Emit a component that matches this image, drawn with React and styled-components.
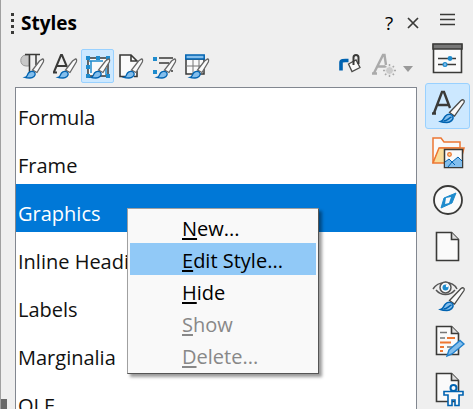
import React, { useState } from "react";
import styled, { createGlobalStyle } from "styled-components";

const DARK = "#3a3a38";
const BLUE = "#1e8bcd";

const styles = ["Formula", "Frame", "Graphics", "Inline Headings", "Labels", "Marginalia", "OLE"];

const menuItems = [
  { label: "New..." },
  { label: "Edit Style...", active: true },
  { label: "Hide" },
  { label: "Show", disabled: true },
  { label: "Delete...", disabled: true },
];

// Brush laid over the small toolbar icons
function SmallBrush() {
  return (
    <g>
      <path d="M22.500 6c1.300 0 1.300 1.500.8 3L17 19.500 12.500 17 19.500 8z" fill="#fafafa" stroke="#666" strokeWidth="1.300" />
      <path d="M5 24.500c2.500-.5 2-2.500 3.500-4.500s5-2.500 6.500 0c1 2.500-2 5-5 5-2 0-3.500 0-5-.5z" fill="#83beec" stroke="#0063b1" strokeWidth="1.300" />
    </g>
  );
}

// Same brush for the 32px deck icons
function LargeBrush() {
  return (
    <g>
      <path d="M29 11.500c2-1.500 4-.5 3 2L22.500 27 17.500 23.500z" fill="#fafafa" stroke="#4a4a48" strokeWidth="1.300" />
      <path d="M8.500 32.500c3-.5 2.500-3 5-5.500s6.500-2 7.500.5c.8 3-2.500 6-6 6-2.500 0-4.500 0-6.500-1z" fill="#83beec" stroke="#0063b1" strokeWidth="1.500" />
      <path d="M11.500 32c4 0 5-3 8-4" fill="none" stroke="#0063b1" strokeWidth="1.500" />
    </g>
  );
}

const SmallIcon = ({ children }) => (
  <svg width="24" height="26" viewBox="0 0 24 26" aria-hidden="true">{children}</svg>
);

const LargeIcon = ({ children }) => (
  <svg width="32" height="34" viewBox="0 0 32 34" aria-hidden="true">{children}</svg>
);

const ParagraphIcon = () => (
  <SmallIcon>
    <path d="M9 2H6C-1 2-1 13 6 13h3z" fill="#c8c8c8" stroke="#999" />
    <path d="M5 1.500h15M9.500 2v18M16 2v10" fill="none" stroke={DARK} strokeWidth="1.500" />
    <SmallBrush />
  </SmallIcon>
);

const CharacterIcon = () => (
  <SmallIcon>
    <path d="M1 19 8 2h1l5 12M4 13h9M0 19.500h4" fill="none" stroke={DARK} strokeWidth="2" />
    <SmallBrush />
  </SmallIcon>
);

const FrameIcon = () => (
  <SmallIcon>
    <path d="M2 5h20v18H2z" fill="#fafafa" stroke={DARK} strokeWidth="1.500" />
    <path d="M3 8h14M5 8v12M20 15v7" stroke={BLUE} strokeWidth="1.500" />
    <path d="M0 3h4v4H0zM10 3h4v4h-4zM20 3h4v4h-4zM0 12h4v4H0zM0 21h4v4H0zM20 21h4v4h-4z" fill={BLUE} />
    <SmallBrush />
  </SmallIcon>
);

const PageIcon = () => (
  <SmallIcon>
    <path d="M1 23V2h11l6 6v15z" fill="#fafafa" />
    <path d="M6 23.500H1V2h11l6 6H12V2M18 18v5.500h-3" fill="none" stroke={DARK} strokeWidth="1.600" />
    <SmallBrush />
  </SmallIcon>
);

const ListIcon = () => (
  <SmallIcon>
    <path d="M1 4h4v4H1zM1 17h4v4H1z" fill={BLUE} />
    <path d="M7 5h14M7 10h10M19 18h2" stroke={DARK} strokeWidth="1.500" />
    <SmallBrush />
  </SmallIcon>
);

const TableIcon = () => (
  <SmallIcon>
    <path d="M1 6h18v15H1z" fill="#fafafa" stroke={DARK} strokeWidth="1.500" />
    <path d="M1 13h18M8 6v15M14 6v15" stroke="#777" />
    <path d="M.8 2h18.400v4H.8z" fill="#83beec" stroke="#0063b1" strokeWidth="1.500" />
    <SmallBrush />
  </SmallIcon>
);

const FillIcon = () => (
  <SmallIcon>
    <path d="M2 17.500V9.500C2 7 5 7.500 9.500 7.500" fill="none" stroke="#0063b1" strokeWidth="3.600" />
    <path d="M9.500 11 17 7l4 7.500-8 4z" fill="#fafafa" stroke="#4a4a48" strokeWidth="1.300" />
    <path d="M14.500 12V4.500c0-3.500 5-3.500 5 0V11" fill="none" stroke={DARK} strokeWidth="2" />
  </SmallIcon>
);

const NewStyleIcon = () => (
  <SmallIcon>
    <path d="M2 20 11 2h1.500l1.500 10M6 13.500h7M0 20.500h5" fill="none" stroke="#aaa" strokeWidth="2.400" />
    <path d="M17.500 11v13M11 17.500h13M13 13l9 9M22 13l-9 9" stroke="#aaa" strokeWidth="1.500" />
    <circle cx="17.500" cy="17.500" r="4" fill="#ccc" stroke="#efefef" />
  </SmallIcon>
);

const PropertiesIcon = () => (
  <LargeIcon>
    <path d="M1.500 2.500h28v28h-28z" fill="#fafafa" stroke={DARK} strokeWidth="1.600" />
    <path d="M1 2h29v5H1z" fill="#777" stroke={DARK} strokeWidth="1.600" />
    <path d="M6 16.500h18M6 22.500h18" stroke={DARK} strokeWidth="1.500" />
    <circle cx="18" cy="16.500" r="2.400" fill={BLUE} />
    <circle cx="13" cy="22.500" r="1.900" fill="#83beec" stroke={BLUE} strokeWidth="1.200" />
  </LargeIcon>
);

const StylesIcon = () => (
  <LargeIcon>
    <path d="M2 24 10 3h2l6 16M5 16h12M0 24.500h4" fill="none" stroke={DARK} strokeWidth="2.400" />
    <LargeBrush />
  </LargeIcon>
);

const GalleryIcon = () => (
  <LargeIcon>
    <path d="M1 27V2h8l3 4h16v6H8L1 27" fill="#fafafa" stroke="#ed7733" strokeWidth="1.500" />
    <path d="m1 27 6-15h25l-4 15z" fill="#f9dc9a" stroke="#ed7733" strokeWidth="1.500" />
    <path d="M12.500 13.500h18v18h-18z" fill="#fafafa" stroke={DARK} strokeWidth="1.500" />
    <path d="M13 30v-4l4-3 3 3 6-5 4 4v6H13z" fill="#83beec" />
    <path d="m13 26 4-3 3 3 6-5 4 4M16 31l4-5 3 3" fill="none" stroke="#0063b1" />
    <circle cx="17.500" cy="18.500" r="1.800" fill="#f9dc9a" stroke="#ed7733" strokeWidth="1.300" />
  </LargeIcon>
);

const NavigatorIcon = () => (
  <LargeIcon>
    <circle cx="16" cy="17" r="14" fill="#fafafa" stroke={DARK} strokeWidth="1.800" />
    <path d="m24 10-4 10-11 5 3-10z" fill={BLUE} stroke={BLUE} strokeLinejoin="round" />
    <path d="m19 14-2 6-4 1 1-6z" fill="#fafafa" />
  </LargeIcon>
);

const SheetOutline = () => (
  <>
    <path d="M4.500 2.500h15l7 7v21h-22z" fill="#fafafa" stroke={DARK} strokeWidth="1.600" />
    <path d="M19.500 2.500v7h7" fill="#ddd" stroke={DARK} strokeWidth="1.600" />
  </>
);

const BlankPageIcon = () => (
  <LargeIcon>
    <SheetOutline />
  </LargeIcon>
);

const InspectorIcon = () => (
  <LargeIcon>
    <path d="M1 12C6 4 20 3 25 12M4 13c5 6 14 6 19 0" fill="none" stroke="#555" strokeWidth="1.500" />
    <circle cx="13.500" cy="10.500" r="5.500" fill="#fafafa" stroke="#555" strokeWidth="1.500" />
    <circle cx="13.500" cy="10.500" r="3" fill={BLUE} />
    <circle cx="15" cy="9" r="1.200" fill="#fafafa" />
    <LargeBrush />
  </LargeIcon>
);

const ChangesIcon = () => (
  <LargeIcon>
    <SheetOutline />
    <path d="M8 8.500h7M8 14h5M15 23h6" stroke="#777" strokeWidth="1.300" />
    <path d="M15 14h8M8 18.500h11M8 23h4M8 27h3" stroke="#ed7733" strokeWidth="2" />
    <path d="m15 32 2-6L28 16.500l4 3.500-12 10z" fill="#83beec" stroke="#2080cc" strokeWidth="1.400" />
  </LargeIcon>
);

const AccessibilityIcon = () => (
  <LargeIcon>
    <SheetOutline />
    <path d="M12 20.500h19v3.500h-4v10.500h-4V29h-3v5.500h-4V24h-4z" fill="#fafafa" stroke="#0063b1" strokeWidth="1.600" />
    <circle cx="21.500" cy="17" r="3" fill="#fafafa" stroke="#0063b1" strokeWidth="2" />
  </LargeIcon>
);

const families = [
  { name: "Paragraph Styles", Icon: ParagraphIcon },
  { name: "Character Styles", Icon: CharacterIcon },
  { name: "Frame Styles", Icon: FrameIcon },
  { name: "Page Styles", Icon: PageIcon },
  { name: "List Styles", Icon: ListIcon },
  { name: "Table Styles", Icon: TableIcon },
];

const decks = [
  { name: "Properties", Icon: PropertiesIcon },
  { name: "Styles", Icon: StylesIcon },
  { name: "Gallery", Icon: GalleryIcon },
  { name: "Navigator", Icon: NavigatorIcon },
  { name: "Page", Icon: BlankPageIcon },
  { name: "Style Inspector", Icon: InspectorIcon },
  { name: "Manage Changes", Icon: ChangesIcon },
  { name: "Accessibility Check", Icon: AccessibilityIcon },
];

export default function App() {
  const [family, setFamily] = useState("Frame Styles");
  const [deck, setDeck] = useState("Styles");
  const [selected, setSelected] = useState("Graphics");

  return (
    <>
      <GlobalStyle />
      <Sidebar>
        <Panel>
          <TitleBar>
            <Grip />
            <Title>Styles</Title>
            <TitleButton aria-label="Help">?</TitleButton>
            <TitleButton aria-label="Close">
              <svg width="12" height="12" viewBox="0 0 12 12" aria-hidden="true">
                <path d="m1 1 10 10M11 1 1 11" stroke={DARK} strokeWidth="1.700" />
              </svg>
            </TitleButton>
          </TitleBar>

          <Toolbar>
            {families.map(({ name, Icon }) => (
              <ToolButton key={name} aria-label={name} $active={family === name} onClick={() => setFamily(name)}>
                <Icon />
              </ToolButton>
            ))}
            <Spacer />
            <ToolButton aria-label="Fill Format Mode"><FillIcon /></ToolButton>
            <ToolButton aria-label="Styles actions" disabled><NewStyleIcon /></ToolButton>
            <ArrowButton aria-label="More style actions" disabled>
              <svg width="10" height="6" viewBox="0 0 10 6" aria-hidden="true">
                <path d="M0 0h10L5 6z" fill="#999" />
              </svg>
            </ArrowButton>
          </Toolbar>

          <StyleList role="listbox" aria-label="Styles">
            {styles.map((name) => (
              <StyleRow
                key={name}
                role="option"
                aria-selected={selected === name}
                $selected={selected === name}
                onClick={() => setSelected(name)}
              >
                {name}
                {selected === name && (
                  <ContextMenu role="menu">
                    {menuItems.map((item) => (
                      <MenuItem key={item.label} role="menuitem" disabled={item.disabled} $active={item.active}>
                        <Mnemonic>{item.label[0]}</Mnemonic>
                        {item.label.slice(1)}
                      </MenuItem>
                    ))}
                  </ContextMenu>
                )}
              </StyleRow>
            ))}
          </StyleList>
        </Panel>

        <TabBar>
          <MenuButton aria-label="Sidebar Settings">
            <svg width="16" height="11" viewBox="0 0 16 11" aria-hidden="true">
              <path d="M0 .5h15M0 5.500h15M0 10.500h15" stroke={DARK} strokeWidth="1.300" />
            </svg>
          </MenuButton>
          {decks.map(({ name, Icon }) => (
            <DeckButton key={name} aria-label={name} $active={deck === name} onClick={() => setDeck(name)}>
              <Icon />
            </DeckButton>
          ))}
        </TabBar>
      </Sidebar>
    </>
  );
}

const GlobalStyle = createGlobalStyle`
  * {
    box-sizing: border-box;
  }
  body {
    margin: 0;
    background: #efefef;
    color: #111;
    font-family: "Open Sans", "Noto Sans", sans-serif;
    font-size: 20px;
  }
  button {
    border: 0;
    padding: 0;
    background: none;
    color: inherit;
    font: inherit;
  }
  svg {
    display: block;
    flex: none;
    overflow: visible;
  }
`;

const Sidebar = styled.div`
  position: relative;
  display: flex;
  height: 100vh;
  overflow: hidden;
  border-left: 1px solid #a0a0a0;
  &::after {
    content: "";
    position: absolute;
    left: 0;
    bottom: 0;
    width: 6px;
    height: 10px;
    background: #696969;
  }
`;

const Panel = styled.section`
  flex: 1;
  min-width: 0;
  display: flex;
  flex-direction: column;
  padding-left: 14px;
`;

const TitleBar = styled.header`
  flex: none;
  display: flex;
  align-items: center;
  height: 46px;
  margin: 0 -8px 0 -4px;
`;

const Grip = styled.span`
  width: 3px;
  height: 21px;
  background: repeating-linear-gradient(${DARK} 0 3px, transparent 3px 6px);
`;

const Title = styled.h1`
  flex: 1;
  margin: 0 0 0 7px;
  color: #000;
  font-size: 19px;
  font-weight: 700;
  line-height: 24px;
`;

const TitleButton = styled.button`
  display: flex;
  align-items: center;
  justify-content: center;
  width: 24px;
  height: 24px;
  color: #000;
  font-size: 19px;
`;

const Toolbar = styled.div`
  flex: none;
  display: flex;
  align-items: center;
  height: 41px;
  padding-bottom: 1px;
`;

const ToolButton = styled.button`
  flex: none;
  display: flex;
  align-items: center;
  justify-content: center;
  width: 33px;
  height: 34px;
  border: 1px solid ${(p) => (p.$active ? "#99d1ff" : "transparent")};
  border-radius: 2px;
  background: ${(p) => (p.$active ? "#cce8ff" : "none")};
`;

const Spacer = styled.div`
  flex: 1;
`;

const ArrowButton = styled.button`
  padding: 5px 4px 0 3px;
`;

const StyleList = styled.ul`
  flex: 1;
  min-height: 0;
  overflow: hidden;
  margin: 0;
  padding: 0;
  border: 1px solid #828790;
  border-bottom: 0;
  background: #fff;
  list-style: none;
`;

const StyleRow = styled.li`
  position: relative;
  height: 48px;
  padding: 16px 2px 0;
  line-height: 28px;
  white-space: nowrap;
  background: ${(p) => (p.$selected ? "#0078d7" : "none")};
  color: ${(p) => (p.$selected ? "#fff" : "inherit")};
  z-index: ${(p) => (p.$selected ? 1 : 0)};
`;

const ContextMenu = styled.div`
  position: absolute;
  top: 24px;
  left: 111px;
  display: flex;
  flex-direction: column;
  width: 192px;
  padding: 2px;
  border: 1px solid #a0a0a0;
  border-right-color: #555;
  border-bottom-color: #555;
  background: #f9f9f9;
  box-shadow: 3px 3px 3px rgba(0, 0, 0, 0.4);
`;

const MenuItem = styled.button`
  height: 32px;
  padding: 4px 0 0 52px;
  line-height: 28px;
  text-align: left;
  background: ${(p) => (p.$active ? "#91c9f7" : "none")};
  color: ${(p) => (p.disabled ? "#888" : "#000")};
`;

const Mnemonic = styled.span`
  text-decoration: underline;
  text-decoration-thickness: 2px;
  text-underline-offset: 2px;
  text-decoration-skip-ink: none;
`;

const TabBar = styled.nav`
  flex: none;
  display: flex;
  flex-direction: column;
  align-items: center;
  gap: 1px;
  padding: 3px 3px 0 8px;
`;

const MenuButton = styled.button`
  flex: none;
  display: flex;
  align-items: center;
  justify-content: center;
  width: 45px;
  height: 32px;
`;

const DeckButton = styled.button`
  flex: none;
  display: flex;
  align-items: center;
  justify-content: center;
  width: 45px;
  height: 46px;
  border: 1px solid ${(p) => (p.$active ? "#99d1ff" : "transparent")};
  border-radius: 3px;
  background: ${(p) => (p.$active ? "#cce8ff" : "none")};
`;
